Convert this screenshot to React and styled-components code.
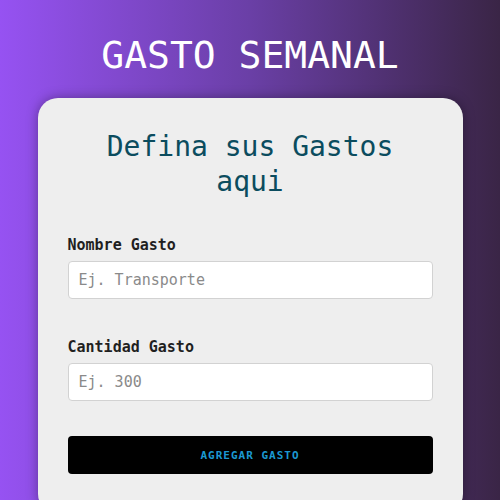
import React, { useState } from "react";
import styled, { createGlobalStyle } from "styled-components";

const GlobalStyle = createGlobalStyle`
  body {
    margin: 0;
    font-family: "DejaVu Sans Mono", "Liberation Mono", monospace;
  }
`;

const fields = [
  { id: "nombre", label: "Nombre Gasto", placeholder: "Ej. Transporte", type: "text" },
  { id: "cantidad", label: "Cantidad Gasto", placeholder: "Ej. 300", type: "number" },
];

const App = () => {
  const [values, setValues] = useState({ nombre: "", cantidad: "" });

  const handleChange = (id, value) => {
    setValues(prev => ({ ...prev, [id]: value }));
  };

  return (
    <Page>
      <GlobalStyle />
      <Title>GASTO SEMANAL</Title>
      <Card>
        <Heading>Defina sus Gastos aqui</Heading>
        <Form onSubmit={(e) => e.preventDefault()}>
          {fields.map(f => (
            <Field key={f.id}>
              <Label htmlFor={f.id}>{f.label}</Label>
              <Input
                id={f.id}
                type={f.type}
                placeholder={f.placeholder}
                value={values[f.id]}
                onChange={(e) => handleChange(f.id, e.target.value)}
              />
            </Field>
          ))}
          <SubmitButton type="submit">Agregar Gasto</SubmitButton>
        </Form>
      </Card>
    </Page>
  );
};

export default App;

const Page = styled.div`
  min-height: 100vh;
  background: linear-gradient(to right, #9652f2, #6a3fa6 50%, #3a2546);
  padding-top: 32px;
  box-sizing: border-box;
  overflow: hidden;
`;

const Title = styled.h1`
  margin: 0 0 20px;
  text-align: center;
  color: white;
  font-size: 38px;
  line-height: 46px;
  font-weight: 400;
`;

const Card = styled.div`
  width: 85%;
  margin: 0 auto;
  background: #eeeeee;
  border-radius: 20px;
  padding: 31px 30px 40px;
  box-sizing: border-box;
  box-shadow: 0 0 12px rgba(0, 0, 0, 0.35);
`;

const Heading = styled.h2`
  margin: 0 0 36px;
  text-align: center;
  color: #0b4c5e;
  font-size: 28px;
  line-height: 35px;
  font-weight: 400;
`;

const Form = styled.form`
  display: flex;
  flex-direction: column;
  gap: 38px;
`;

const Field = styled.div`
  display: flex;
  flex-direction: column;
  gap: 6px;
`;

const Label = styled.label`
  font-size: 15px;
  line-height: 20px;
  font-weight: bold;
  color: #1f1f1f;
`;

const Input = styled.input`
  height: 38px;
  box-sizing: border-box;
  padding: 0 10px;
  border: 1px solid #d2d2d2;
  border-radius: 4px;
  background: white;
  font-family: inherit;
  font-size: 15px;
  color: #222;
  outline: none;
  &::placeholder {
    color: #8a8a8a;
  }
  &::-webkit-inner-spin-button {
    -webkit-appearance: none;
  }
`;

const SubmitButton = styled.button`
  margin-top: -3px;
  height: 38px;
  border: none;
  border-radius: 4px;
  background: #000;
  color: #1b98d2;
  font-family: inherit;
  font-size: 11px;
  font-weight: bold;
  letter-spacing: 1px;
  text-transform: uppercase;
  cursor: pointer;
`;
